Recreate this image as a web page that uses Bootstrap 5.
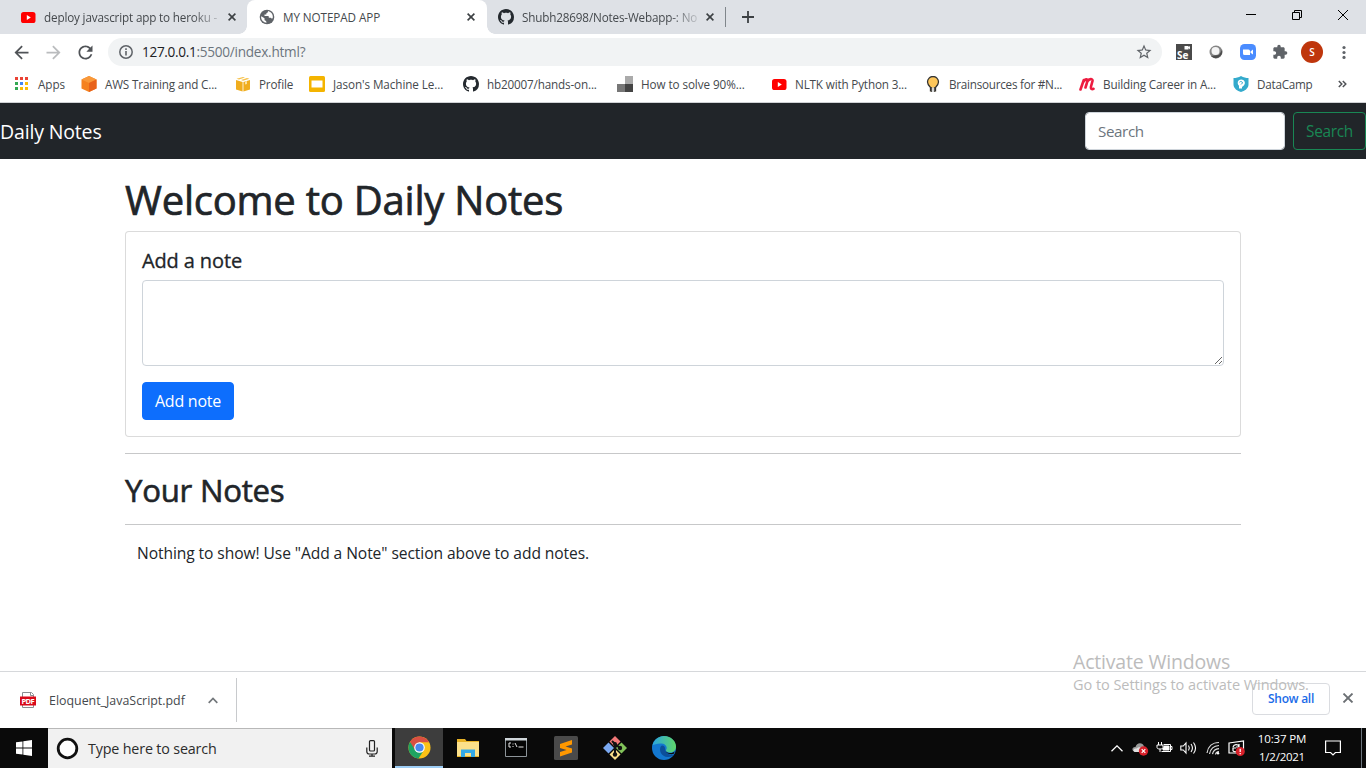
<!DOCTYPE html>
<html lang="en">
<head>
<meta charset="utf-8">
<meta name="viewport" content="width=device-width, initial-scale=1">
<title>MY NOTEPAD APP</title>
<link href="https://cdn.jsdelivr.net/npm/bootstrap@5.3.0/dist/css/bootstrap.min.css" rel="stylesheet">
<style>
body{font-family:"Open Sans","Noto Sans",sans-serif;height:768px;overflow:hidden;background:#fff;color:#212529;--bs-border-radius:.25rem}
svg{display:block;flex:none}
.lbl{white-space:nowrap;display:inline-block}
.ls-1{letter-spacing:-.08px}
.ls-2{letter-spacing:-.16px}
.ls-3{letter-spacing:-.25px}
.ls-4{letter-spacing:-.33px}
.ui{font-size:11.7px;line-height:16px;color:#45494d}
.tabstrip{height:34px;background:#dee1e6}
.tabstrip .lbl,.marks .lbl{position:relative;top:-.5px}
.tab-a{width:247px;padding-left:20px}
.tab-b{width:240px;padding-left:12px;background:#fff;border-radius:8px 8px 0 0;position:relative}
.tab-b::before,.tab-b::after{content:"";position:absolute;bottom:0;width:8px;height:8px}
.tab-b::before{left:-8px;background:radial-gradient(circle at 0 0,#dee1e6 7.5px,#fff 8px)}
.tab-b::after{right:-8px;background:radial-gradient(circle at 100% 0,#dee1e6 7.5px,#fff 8px)}
.tab-c{width:238px;padding-left:11px}
.ttl{width:176px}
.ttl.fade-end{-webkit-mask-image:linear-gradient(90deg,#000 148px,transparent 182px)}
.split{width:1px;height:20px;background:#80868b}
.winbtn{width:46px}
.toolbar{height:36px;padding-left:11px}
.navico{width:32px}
.omni{height:28px;width:1054px;border-radius:14px;background:#f1f3f4;padding:0 9px;margin-left:1px;font-size:13.6px;color:#202124}
.url{margin-left:7px}
.ext{width:32px}
.exts{padding-left:6px}
.avatar{width:22px;height:22px;background:#bf360c;color:#fff;font-size:10px}
.marks{height:32px;padding:0 0 4px 14px}
.bm{width:154px}.bm.w1{width:67px}.bm.w2{width:74px}.bm.w3{width:97px}
.page-top{height:56px;border-radius:0}
.page-top .navbar-brand{color:#fff;font-size:19.5px;transform:translateY(1px)}
.chrome-line{height:1px;background:#d0d2d5}
.w-search{width:200px}
.form-control,.btn,.card{border-radius:.25rem}
.form-control{border-color:#ced4da}
.form-control::placeholder{color:#6c757d;font-size:15.2px;letter-spacing:-.4px}
.btn-find{width:73px;padding-left:0;padding-right:0}
.btn-find .lbl{font-size:15.4px}
.card{border-color:rgba(0,0,0,.14)}
.hd{-webkit-text-stroke:.7px currentColor;transform:translateY(1px)}
.hd-1{letter-spacing:-.23px}
.hd-2{font-size:31.2px;-webkit-text-stroke-width:.6px}
.hd-5{letter-spacing:-.13px;-webkit-text-stroke-width:.3px}
h2{height:38.4px}
.empty{font-size:15.6px;line-height:24px;letter-spacing:-.08px}
hr{opacity:.25}
.shelf{height:57px;border-top:1px solid #d6d8db;background:#fff}
.dl{width:237px;height:44px;padding-left:20px;border-right:1px solid #c8cacd}
.dl .lbl{margin-left:13px;font-size:12.4px;padding-top:2px}
.dl .caret{margin-right:18px}
.showall{width:78px;height:32px;border:1px solid #dadce0;border-radius:4px;color:#1a6be8;font-weight:600;font-size:12px;margin-bottom:2px}
.wm{position:absolute;left:1073px;top:650px;color:#bcbcbc;pointer-events:none}
.wm1{font-size:19.5px;line-height:24px;letter-spacing:-.19px}
.wm2{font-size:14.5px;line-height:22px;letter-spacing:-.05px}
.taskbar{height:40px;background:#0a0a0a}
.start{width:48px}
.tsearch{width:344px;height:40px;background:#f1f1f1;border-top:1px solid #b8b8b8;padding:0 14px 0 8px;color:#2c2c2c;font-size:14.3px}
.tsearch .lbl{margin-left:9px}
.app{width:49px;height:40px}
.app.on{width:48px;background:#3d3d3d;border-bottom:2px solid #9dcdf5;margin-left:3px}
.tray{gap:7px}
.tray .bell{margin-left:6px}
.clock{font-size:11.5px;line-height:18px;color:#fff;width:60px}
.peek{width:5px;height:40px;margin-left:13px}
</style>
</head>
<body class="d-flex flex-column">
<svg width="0" height="0" class="position-absolute">
 <symbol id="yt" viewBox="0 0 16 16"><rect x="1" y="3" width="14.5" height="11" rx="2.6" fill="#f00"/><path d="M6.8 6v5l4-2.5z" fill="#fff"/></symbol>
 <symbol id="gh" viewBox="0 0 16 16"><path fill="#24292e" d="M8 0C3.58 0 0 3.58 0 8c0 3.54 2.29 6.53 5.47 7.59.4.07.55-.17.55-.38 0-.19-.01-.82-.01-1.49-2.01.37-2.53-.49-2.69-.94-.09-.23-.48-.94-.82-1.13-.28-.15-.68-.52-.01-.53.63-.01 1.08.58 1.23.82.72 1.21 1.87.87 2.33.66.07-.52.28-.87.51-1.07-1.78-.2-3.64-.89-3.64-3.95 0-.87.31-1.59.82-2.15-.08-.2-.36-1.02.08-2.12 0 0 .67-.21 2.2.82.64-.18 1.32-.27 2-.27s1.36.09 2 .27c1.53-1.04 2.2-.82 2.2-.82.44 1.1.16 1.92.08 2.12.51.56.82 1.27.82 2.15 0 3.07-1.87 3.75-3.65 3.95.29.25.54.73.54 1.48 0 1.07-.01 1.93-.01 2.2 0 .21.15.46.55.38A8.01 8.01 0 0 0 16 8c0-4.42-3.58-8-8-8z"/></symbol>
 <symbol id="x" viewBox="0 0 8 8"><path d="M.6.6l6.8 6.8M7.4.6L.6 7.4" stroke="#3c4043" stroke-width="1.6"/></symbol>
</svg>

<header class="flex-shrink-0">
 <div class="tabstrip d-flex ui">
  <div class="tab-a d-flex align-items-center"><svg width="16" height="16"><use href="#yt"/></svg><div class="ttl fade-end ms-2"><span class="lbl ls-2">deploy javascript app to heroku -</span></div><svg class="ms-2" width="8" height="8"><use href="#x"/></svg></div>
  <div class="tab-b d-flex align-items-center"><svg width="16" height="16" viewBox="0 0 16 16"><circle cx="8" cy="8" r="7.300" fill="#5f6368"/><path fill="#fff" d="M2.300 7.200L5.500 9.300v1.200c0 .8.500 1.300 1.500 1.300l.5 2C4.500 13.500 2 11 2.100 8zM9 1.900c0 1.200-.3 1.900-1.500 2L7.300 5.500H5.500V7h3.300c.7 0 1 .4 1 1v.8h1.600c.8 0 1.300.4 1.500 1.200l.9-1.300c.5-3-1.500-6-4.800-6.800z"/></svg><div class="ttl ms-2"><span class="lbl ls-1">MY NOTEPAD APP</span></div><svg class="ms-2" width="8" height="8"><use href="#x"/></svg></div>
  <div class="tab-c d-flex align-items-center"><svg width="16" height="16"><use href="#gh"/></svg><div class="ttl fade-end ms-2"><span class="lbl ls-2">Shubh28698/Notes-Webapp-: No</span></div><svg class="ms-2" width="8" height="8"><use href="#x"/></svg></div>
  <div class="split align-self-center"></div>
  <svg class="align-self-center ms-3" width="12" height="12" viewBox="0 0 12 12"><path d="M6 0v12M0 6h12" stroke="#3c4043" stroke-width="1.8"/></svg>
  <div class="d-flex ms-auto pb-1">
   <div class="winbtn d-flex align-items-center justify-content-center"><svg width="10" height="10"><path d="M0 4.500h10" stroke="#000"/></svg></div>
   <div class="winbtn d-flex align-items-center justify-content-center"><svg width="10" height="10" fill="none" stroke="#000"><path d="M.5 2.500h7v7h-7zM2.500 2.500v-2h7v7h-2"/></svg></div>
   <div class="winbtn d-flex align-items-center justify-content-center"><svg width="10" height="10" stroke="#000"><path d="M0 0l10 10M10 0L0 10"/></svg></div>
  </div>
 </div>

 <div class="toolbar d-flex align-items-center">
  <div class="navico"><svg width="21" height="21" viewBox="0 0 24 24"><path fill="#505357" d="M20 11H7.830l5.590-5.590L12 4l-8 8 8 8 1.410-1.410L7.830 13H20z"/></svg></div>
  <div class="navico"><svg width="21" height="21" viewBox="0 0 24 24"><path fill="#babcbe" d="M4 11h12.170l-5.590-5.590L12 4l8 8-8 8-1.410-1.410L16.170 13H4z"/></svg></div>
  <div class="navico"><svg width="21" height="21" viewBox="0 0 24 24"><path fill="#505357" d="M17.650 6.350C16.200 4.900 14.210 4 12 4c-4.420 0-7.990 3.580-7.990 8s3.570 8 7.990 8c3.730 0 6.840-2.550 7.730-6h-2.080c-.82 2.330-3.040 4-5.650 4-3.310 0-6-2.690-6-6s2.690-6 6-6c1.660 0 3.140.69 4.220 1.780L13 11h7V4z"/></svg></div>
  <div class="omni d-flex align-items-center">
   <svg width="18" height="18" viewBox="0 0 18 18"><circle cx="9" cy="9" r="6.200" fill="none" stroke="#5f6368" stroke-width="1.500"/><path d="M9 8v4.500M9 5.300v1.600" stroke="#5f6368" stroke-width="1.600"/></svg>
   <span class="lbl url ls-4">127.0.0.1</span><span class="lbl text-secondary ls-3">:5500/index.html?</span>
   <svg class="ms-auto" width="18" height="18" viewBox="0 0 24 24"><path fill="#5f6368" d="M22 9.240l-7.190-.62L12 2 9.190 8.630 2 9.240l5.460 4.730L5.820 21 12 17.270 18.180 21l-1.630-7.030zM12 15.400l-3.760 2.270 1-4.280-3.320-2.880 4.380-.38L12 6.100l1.710 4.040 4.380.38-3.320 2.880 1 4.280z"/></svg>
  </div>
  <div class="exts d-flex align-items-center">
   <div class="ext d-flex justify-content-center"><svg width="16" height="16"><path fill="#4a4a4a" d="M0 0h16v16H0z"/><path fill="#fff" d="M8.500 2h4v3.500h-4zM12 3.500l2-1.500v3.500z"/><text x="1" y="14.500" font-family="Open Sans" font-size="10" font-weight="700" fill="#fff">Se</text></svg></div>
   <div class="ext d-flex justify-content-center"><svg width="16" height="16"><circle cx="8" cy="8" r="6.500" fill="#858585"/><path d="M3 12A6.500 6.500 0 0 0 14 6l-3 5z" fill="#4c4c4c"/><circle cx="7.500" cy="7" r="4" fill="#f4f4f4"/></svg></div>
   <div class="ext d-flex justify-content-center"><svg width="16" height="16"><rect width="16" height="16" rx="4.500" fill="#4a8cff"/><path d="M3 5.500h5.500a1.500 1.500 0 0 1 1.500 1.500v4H4.500A1.500 1.500 0 0 1 3 9.500zM10.500 7.500L13 5.500v5l-2.500-1.700z" fill="#fff"/></svg></div>
   <div class="ext d-flex justify-content-center"><svg width="16" height="16" viewBox="0 0 24 24"><path fill="#5f6368" d="M20.500 11H19V7c0-1.100-.9-2-2-2h-4V3.500C13 2.120 11.880 1 10.500 1S8 2.120 8 3.500V5H4c-1.100 0-1.990.9-1.990 2v3.800H3.500c1.490 0 2.700 1.210 2.700 2.700s-1.210 2.700-2.700 2.700H2V20c0 1.100.9 2 2 2h3.800v-1.500c0-1.490 1.210-2.700 2.700-2.700s2.700 1.210 2.700 2.700V22H17c1.100 0 2-.9 2-2v-4h1.500a2.500 2.500 0 0 0 0-5z"/></svg></div>
   <div class="ext d-flex justify-content-center"><div class="avatar rounded-circle d-flex align-items-center justify-content-center fw-semibold">S</div></div>
   <div class="ext d-flex justify-content-center"><svg width="4" height="14" fill="#5f6368"><circle cx="2" cy="2.500" r="1.600"/><circle cx="2" cy="7.500" r="1.600"/><circle cx="2" cy="12.400" r="1.600"/></svg></div>
  </div>
 </div>

 <nav class="marks d-flex ui align-items-center">
  <div class="bm w1 d-flex align-items-center gap-2"><svg width="16" height="16"><path fill="#ea4335" d="M1 1h3v3H1zM6 1h3v3H6zM11 1h3v3h-3z"/><path fill="#34a853" d="M1 6h3v3H1zM1 11h3v3H1z"/><path fill="#4285f4" d="M6 6h3v3H6z"/><path fill="#fbbc05" d="M11 6h3v3h-3zM6 11h3v3H6zM11 11h3v3h-3z"/></svg><span class="lbl ls-1">Apps</span></div>
  <div class="bm d-flex align-items-center gap-2"><svg width="16" height="16"><path d="M8 0l7.500 3.500v9L8 16 .5 12.500v-9z" fill="#f58220"/><path d="M8 0l7.500 3.500L8 7 .5 3.500z" fill="#f9993a"/><path d="M8 7l7.500-3.500v9L8 16z" fill="#e8621a"/></svg><span class="lbl ls-2">AWS Training and C...</span></div>
  <div class="bm w2 d-flex align-items-center gap-2"><svg width="16" height="16"><path d="M1 4l6.600 2v9.500L1 13.500zM8.400 6L15 4v9.500l-6.600 2z" fill="#f0ad1e"/><path d="M1.500 2.800L8 1l2 .6-6 2zM14.500 2.800L12 2 6 4l2 .8z" fill="#f6c14b"/><path d="M10 5.500v3l2-.6v-3z" fill="#fbe0a0"/></svg><span class="lbl ls-2">Profile</span></div>
  <div class="bm d-flex align-items-center gap-2"><svg width="16" height="16"><rect width="16" height="16" rx="1.500" fill="#f4b400"/><path d="M2.500 4.500h11v7h-11z" fill="#fff"/></svg><span class="lbl ls-1">Jason's Machine Le...</span></div>
  <div class="bm d-flex align-items-center gap-2"><svg width="16" height="16"><use href="#gh"/></svg><span class="lbl ls-2">hb20007/hands-on...</span></div>
  <div class="bm d-flex align-items-center gap-2"><svg width="16" height="16"><path fill="#aaa" d="M8 0h8v8H8z"/><path fill="#777" d="M0 8h8v8H0z"/><path fill="#444" d="M8 8h8v8H8z"/></svg><span class="lbl ls-1">How to solve 90%...</span></div>
  <div class="bm d-flex align-items-center gap-2"><svg width="16" height="16"><use href="#yt"/></svg><span class="lbl ls-2">NLTK with Python 3...</span></div>
  <div class="bm d-flex align-items-center gap-2"><svg width="16" height="16"><path d="M5.500 15.500v-4C3.500 9.500 2.500 8 2.500 6a5.500 5.500 0 0 1 11 0c0 2-1 3.500-3 5.500v4" fill="#fdc65a" stroke="#333" stroke-width="1.300"/><path d="M6.300 11.500h3.400v4.500H6.300z" fill="#fff"/><path d="M6.700 11v5M9.300 11v5" stroke="#333"/></svg><span class="lbl ls-3">Brainsources for #N...</span></div>
  <div class="bm d-flex align-items-center gap-2"><svg width="16" height="16" fill="none" stroke="#ed1c40" stroke-linecap="round" stroke-width="2.600"><path d="M1.500 13.500L4.800 4M4.600 5.500C6 3 8.800 2.500 8.500 5L6.500 11.500M8.500 5.500c1.500-3.200 5.500-3 5-.5L12 10.500c-.5 2.500 1 3 2.500 2.300"/></svg><span class="lbl ls-2">Building Career in A...</span></div>
  <div class="bm w3 d-flex align-items-center gap-2"><svg width="16" height="16"><path d="M8 0c2.500 1.500 5 2 7.500 2v6.500c0 4-4 6.500-7.500 7.500C4.500 15 .5 12.500.5 8.500V2C3 2 5.500 1.500 8 0z" fill="#33aacc"/><path d="M6 12.500V9.800C3.500 7 5 3.500 8.200 3.500s5 3.500 2.600 6L9 11v1.500z" fill="#fff"/><path d="M6.500 6.200C7.500 5 9.500 5.500 9.500 7L8 8.500" stroke="#33aacc" fill="none"/></svg><span class="lbl ls-3">DataCamp</span></div>
  <svg width="9" height="8" class="ms-2" fill="none" stroke="#505357" stroke-width="1.500"><path d="M.8 1l3 3-3 3M4.800 1l3 3-3 3"/></svg>
 </nav>
 <div class="chrome-line"></div>
</header>

<main class="flex-grow-1 overflow-hidden">
 <nav class="navbar navbar-dark bg-dark page-top py-0">
  <a class="navbar-brand lbl m-0 ls-2" href="#">Daily Notes</a>
  <form class="d-flex">
   <input class="form-control me-2 w-search" type="search" placeholder="Search">
   <button class="btn btn-outline-success btn-find" type="button"><span class="lbl ls-4">Search</span></button>
  </form>
 </nav>
 <div class="container mt-3">
  <h1><span class="lbl hd hd-1">Welcome to Daily Notes</span></h1>
  <div class="card">
   <div class="card-body">
    <h5 class="card-title"><span class="lbl hd hd-5">Add a note</span></h5>
    <textarea class="form-control mb-3" rows="3"></textarea>
    <button class="btn btn-primary" type="button"><span class="lbl ls-3">Add note</span></button>
   </div>
  </div>
  <hr>
  <h2><span class="lbl hd hd-2 ls-3">Your Notes</span></h2>
  <hr>
  <div class="container-fluid empty"><span class="lbl">Nothing to show! Use "Add a Note" section above to add notes.</span></div>
 </div>
</main>

<div class="shelf d-flex align-items-center ui flex-shrink-0">
 <div class="dl d-flex align-items-center">
  <svg width="16" height="16"><path d="M2.500 5V.5h9l2 2V5M2.500 12v3.500h11V12" fill="#fff" stroke="#8a8d91"/><path d="M10.500.5v3h3" fill="none" stroke="#8a8d91"/><path fill="#d9091a" d="M0 4.500h16v9H0z"/><text x="1.500" y="11.800" font-family="Open Sans" font-size="7.500" font-weight="700" fill="#fff" textLength="13">PDF</text></svg>
  <span class="lbl">Eloquent_JavaScript.pdf</span>
  <svg class="ms-auto caret" width="10" height="7" fill="none" stroke="#73777b" stroke-width="1.700"><path d="M.7 5.800L5 1.500l4.300 4.300"/></svg>
 </div>
 <div class="showall ms-auto d-flex align-items-center justify-content-center"><span class="lbl ls-3">Show all</span></div>
 <svg class="ms-2 me-2 mb-1" width="20" height="10" viewBox="-5 0 20 10" stroke="#6b6f73" stroke-width="1.800"><path d="M.5.5l9 9M9.500.5l-9 9"/></svg>
</div>

<footer class="taskbar d-flex flex-shrink-0 align-items-center">
 <div class="start d-flex justify-content-center"><svg width="16" height="16" fill="#fff"><path d="M0 2.300L6.500 1.400v6.200H0zM7.300 1.300L16 0v7.600H7.300zM0 8.400h6.500v6.200L0 13.700zM7.300 8.400H16V16l-8.700-1.300z"/></svg></div>
 <div class="tsearch d-flex align-items-center">
  <svg width="23" height="23"><circle cx="11.500" cy="11.500" r="9.300" fill="#fff" stroke="#111" stroke-width="2.800"/></svg>
  <span class="lbl ls-2">Type here to search</span>
  <svg class="ms-auto" width="12" height="17" fill="none" stroke="#222" stroke-width="1.200"><rect x="3.500" y=".6" width="5" height="10.400" rx="1"/><path d="M.8 7.500v4c0 1.500.8 2.500 2.500 2.500h5.400c1.700 0 2.500-1 2.500-2.500v-4M6 14v2M3 16.200h6"/></svg>
 </div>
 <div class="app on d-flex align-items-center justify-content-center"><svg width="23" height="23" viewBox="0 0 48 48"><circle cx="24" cy="24" r="23" fill="#fbc116"/><path d="M24 24L4 12.500A23 23 0 0 0 22 47l9-14z" fill="#1ea362"/><path d="M24 13h20A23 23 0 0 0 4.200 12L14 28z" fill="#d94f42"/><circle cx="24" cy="24" r="11" fill="#fff"/><circle cx="24" cy="24" r="8.600" fill="#4a88ee"/></svg></div>
 <div class="app d-flex align-items-center justify-content-center"><svg width="22" height="20"><path d="M0 1h8l1.500 2H22v16H0z" fill="#e8b226"/><path d="M0 4h22v14H0z" fill="#fbe08a"/><path d="M4 11.500h14V19h-4v-4H8v4H4z" fill="#34a9e6"/></svg></div>
 <div class="app d-flex align-items-center justify-content-center pe-1"><svg width="24" height="20" viewBox="-2 0 24 20"><path d="M.5.500h21v18H.5z" fill="#050505" stroke="#8d9499"/><path d="M0 0h22v2.500H0z" fill="#cfd6da"/><path d="M6 5H4v4h2M8 5.500v1M8 8v1M10 5l2 4M13.500 9h5" stroke="#e6e6e6" fill="none"/></svg></div>
 <div class="app d-flex align-items-center justify-content-center"><svg width="24" height="24"><rect width="24" height="24" rx="1.500" fill="#4a4a4a"/><path d="M6 8l12-4v4.500L11.500 10.500 18 12.500v4L6 20.500V16l6.500-2L6 12z" fill="#ff9800"/></svg></div>
 <div class="app d-flex align-items-center justify-content-center"><svg width="24" height="24"><path d="M12 0l5.500 5.500L12 11 6.500 5.500z" fill="#f27878"/><path d="M5.500 6.500L11 12l-5.500 5.500L0 12z" fill="#7ba9f2"/><path d="M18.500 6.500L24 12l-5.500 5.500L13 12z" fill="#82c35a"/><path d="M12 13l5.500 5.500L12 24l-5.500-5.500z" fill="#fbe08a"/><path d="M9 5l3 3v11M12 8l5 4" stroke="#111" stroke-width="2" fill="none"/><circle cx="12" cy="8" r="2" fill="#111"/><circle cx="17" cy="12" r="2.200" fill="#111"/><circle cx="12" cy="18.500" r="2.200" fill="#111"/></svg></div>
 <div class="app d-flex align-items-center justify-content-center"><svg width="24" height="24"><defs><linearGradient id="eg" x1="0" x2="1"><stop offset="0" stop-color="#2aa5e0"/><stop offset="1" stop-color="#5fd668"/></linearGradient></defs><circle cx="12" cy="12" r="12" fill="#1377cf"/><path d="M.4 9.500C2 3.500 7 0 12 0c7.500 0 12 5.500 12 10.500 0 4-3 6-6 6s-4.500-1.500-4-2.500c1.500-1.500 1-6-4.500-6.500-4-.3-7.500 1-9.100 2z" fill="url(#eg)"/><path d="M9 10c-2.500 4 0 11 7 11 3 0 5-1 6-2.500-1 .5-9 1-9-6.500 0-1.500-2.500-3.500-4-2z" fill="#0c4f9a"/><path d="M13.500 13c-.5 2 1 4 5 4 1.800 0 3.200-.6 4.300-1.500L21.500 18c-4.500.7-8.500-1-8-5z" fill="#0a0a0a"/></svg></div>

 <div class="tray d-flex align-items-center ms-auto">
  <svg width="14" height="7" fill="none" stroke="#fff" stroke-width="1.300"><path d="M.5 6.300L6 .9l5.500 5.400"/></svg>
  <svg width="17" height="16"><path d="M3 11.500C-1 11 0 6.500 3.500 7 4.500 2 11 2 12 6.500l3 2v3z" fill="#9a9a9a"/><path d="M3 12C0 11 1.500 8 4.500 8.500 7 6 11 7 11.500 12z" fill="#e0e0e0"/><circle cx="11.500" cy="11" r="4.700" fill="#d8202a"/><path d="M9.700 9.200l3.600 3.600M13.300 9.200l-3.600 3.600" stroke="#fff" stroke-width="1.200"/></svg>
  <svg width="17" height="14" fill="none" stroke="#fff"><path d="M2.500 1v3M5.500 1v3M1 4h6v2.500c0 1-1 1.500-3 1.500S1 7.500 1 6.500zM4 8v3M7.500 3.500h7v7h-9"/><path d="M14.500 5.500H16v3h-1.500" /><path d="M8 5h5v4H7V7h1z" fill="#fff"/></svg>
  <svg width="19" height="14" fill="none" stroke="#fff" stroke-width="1.100"><path d="M.8 5h2.500L6 2v10L3.300 9H.8zM8.500 4.500c1 1.500 1 3.500 0 5M11 3c1.800 2.500 1.800 5.500 0 8M13.500 1.500c2.600 3.500 2.600 7.500 0 11"/></svg>
  <svg width="15" height="14" fill="none" stroke="#ddd" stroke-width="1.200"><path d="M1 12C2 5.500 6.500 1.500 13 1.500M3.500 13C4.500 7.500 7.500 4.800 13 4.500M6.500 13.200C7 10 9 8 13 7.600M9.500 13.500c.3-1.800 1.500-2.800 3.500-3"/><circle cx="12" cy="12.300" r="1.200" fill="#fff" stroke="none"/></svg>
  <svg width="17" height="17"><path d="M1 3l14.500-2v12H1z" fill="none" stroke="#fff" stroke-width="1.200"/><path d="M5 7c1-3 5-3 6-.5M11 4v3H8M5 11V8h3M5 11c1 .8 2 .8 3 .5" fill="none" stroke="#fff" stroke-width="1.200"/><circle cx="12.200" cy="11.500" r="4.500" fill="#d8202a"/><path d="M12.200 8.800v3.200M12.200 13v1.200" stroke="#fff" stroke-width="1.300"/></svg>
  <div class="clock text-center"><div class="lbl ls-2">10:37 PM</div><div class="lbl ls-3">1/2/2021</div></div>
  <svg class="bell" width="16" height="16" fill="none" stroke="#fff" stroke-width="1.200"><path d="M.6 1h14.800v11.500h-5L8 15l-2.400-2.500h-5z"/></svg>
  <div class="peek border-start border-secondary"></div>
 </div>
</footer>

<div class="wm"><div class="wm1">Activate Windows</div><div class="wm2">Go to Settings to activate Windows.</div></div>
<script src="https://cdn.jsdelivr.net/npm/bootstrap@5.3.0/dist/js/bootstrap.bundle.min.js"></script>
</body>
</html>
